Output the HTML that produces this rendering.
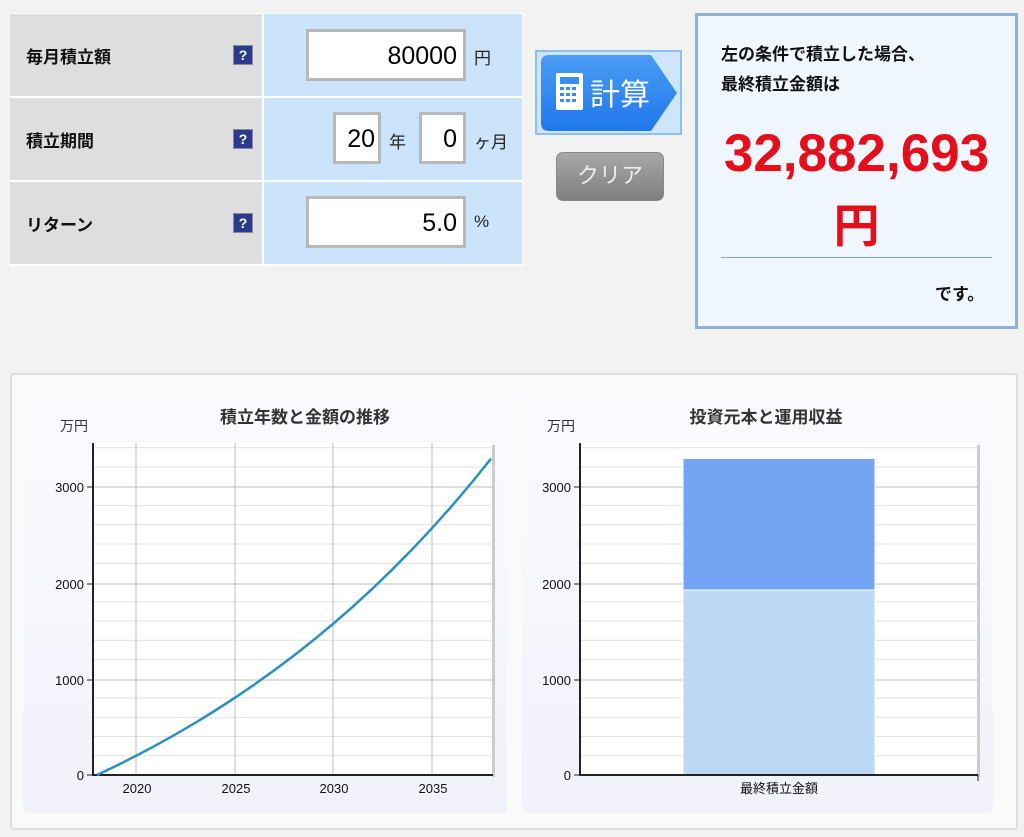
<!DOCTYPE html>
<html><head><meta charset="utf-8"><style>
body{margin:0;width:1024px;height:837px;background:#f2f2f2;font-family:"Liberation Sans","Noto Sans CJK JP",sans-serif;position:relative;overflow:hidden}
.a{position:absolute}
.lab{background:#dedede;font-weight:bold;font-size:17px;color:#111}
.val{background:#cce4fb}
.inp{background:#fff;border:3px solid #b8b8b8;box-sizing:border-box;font-size:25px;text-align:right;padding-right:6px;color:#000}
.q{width:18px;height:18px;background:#2a3b8f;color:#fff;font-size:14px;font-weight:bold;text-align:center;line-height:18px;border:1px solid #889}
.u{font-size:17px;color:#222}
</style></head><body>
<div class="a" style="left:10px;top:13px;width:513px;height:253px;background:#fff"></div>
<div class="a lab" style="left:10px;top:14px;width:252px;height:82px"><span class="a" style="left:16px;top:29px">毎月積立額</span><div class="a q" style="left:223px;top:31px">?</div></div>
<div class="a lab" style="left:10px;top:98px;width:252px;height:82px"><span class="a" style="left:16px;top:29px">積立期間</span><div class="a q" style="left:223px;top:31px">?</div></div>
<div class="a lab" style="left:10px;top:182px;width:252px;height:82px"><span class="a" style="left:16px;top:29px">リターン</span><div class="a q" style="left:223px;top:31px">?</div></div>
<div class="a val" style="left:264px;top:14px;width:258px;height:82px"></div>
<div class="a val" style="left:264px;top:98px;width:258px;height:82px"></div>
<div class="a val" style="left:264px;top:182px;width:258px;height:82px"></div>
<div class="a inp" style="left:306px;top:29px;width:160px;height:52px;line-height:48px">80000</div>
<span class="a u" style="left:474px;top:44px">円</span>
<div class="a inp" style="left:333px;top:112px;width:48px;height:52px;line-height:48px;padding-right:3px">20</div>
<span class="a u" style="left:389px;top:128px">年</span>
<div class="a inp" style="left:419px;top:112px;width:47px;height:52px;line-height:48px">0</div>
<span class="a u" style="left:474px;top:128px">ヶ月</span>
<div class="a inp" style="left:306px;top:196px;width:160px;height:52px;line-height:48px">5.0</div>
<span class="a u" style="left:474px;top:212px">%</span>

<div class="a" style="left:535px;top:50px;width:143px;height:81px;border:2px solid #8cc0f4;background:#cfe5fb"></div>
<svg class="a" style="left:541px;top:55px" width="137" height="76"><defs><linearGradient id="bg" x1="0" y1="0" x2="0" y2="1"><stop offset="0" stop-color="#4b9cf4"/><stop offset="1" stop-color="#1f78ec"/></linearGradient></defs>
<path d="M8 0 H110 L136 38 L110 76 H8 Q0 76 0 68 V8 Q0 0 8 0Z" fill="url(#bg)"/>
<rect x="15" y="18" width="27" height="37" rx="2" fill="#fff"/><rect x="19" y="22" width="19" height="7" fill="#3a8cf0"/>
<g fill="#3a8cf0"><rect x="19" y="32" width="4" height="3"/><rect x="25" y="32" width="4" height="3"/><rect x="31" y="32" width="4" height="3"/><rect x="19" y="38" width="4" height="3"/><rect x="25" y="38" width="4" height="3"/><rect x="31" y="38" width="4" height="3"/><rect x="19" y="44" width="4" height="3"/><rect x="25" y="44" width="4" height="3"/><rect x="31" y="44" width="4" height="3"/></g>
<text x="49" y="50" font-size="30" fill="#fff" font-family="Noto Sans CJK JP,sans-serif">計算</text></svg>
<div class="a" style="left:556px;top:152px;width:108px;height:49px;border-radius:7px;background:linear-gradient(#a8a8a8,#7e7e7e);border:1px solid #888;box-sizing:border-box;color:#eee;font-size:22px;text-align:center;line-height:46px">クリア</div>

<div class="a" style="left:695px;top:13px;width:323px;height:316px;box-sizing:border-box;border:3px solid #8eb1d8;background:#f0f6fd"></div>
<div class="a" style="left:721px;top:40px;font-size:17px;font-weight:bold;line-height:30px;color:#111">左の条件で積立した場合、<br>最終積立金額は</div>
<div class="a" style="left:695px;top:123px;width:323px;text-align:center;color:#e50f1b;font-size:53px;font-weight:bold">32,882,693</div>
<div class="a" style="left:695px;top:190px;width:323px;text-align:center;color:#e50f1b;font-size:46px;font-weight:bold;font-family:'Noto Sans CJK JP',sans-serif">円</div>
<div class="a" style="left:721px;top:257px;width:271px;height:1px;background:#7fa5d1"></div>
<div class="a" style="left:935px;top:280px;font-size:17px;font-weight:bold;color:#111">です。</div>

<div class="a" style="left:10px;top:373px;width:1008px;height:457px;box-sizing:border-box;border:2px solid #ddd;border-radius:4px;background:#fafafa"></div>
<div class="a" style="left:23px;top:386px;width:484px;height:427px;border-radius:5px;background:linear-gradient(#fbfbfe,#f1f1fb)"></div>
<div class="a" style="left:522px;top:386px;width:471px;height:427px;border-radius:5px;background:linear-gradient(#fbfbfe,#f1f1fb)"></div>

<svg class="a" style="left:0;top:0" width="1024" height="837" font-family="Liberation Sans,Noto Sans CJK JP,sans-serif">
<g>
<rect x="93" y="443" width="400" height="332" fill="#fff"/>
<rect x="492" y="445" width="3" height="332" fill="#ccc"/>
<g stroke="#e2e2e2" stroke-width="1">
<line x1="93" x2="493" y1="755.8" y2="755.8"/><line x1="93" x2="493" y1="736.5" y2="736.5"/><line x1="93" x2="493" y1="717.3" y2="717.3"/><line x1="93" x2="493" y1="698" y2="698"/><line x1="93" x2="493" y1="659.6" y2="659.6"/><line x1="93" x2="493" y1="640.3" y2="640.3"/><line x1="93" x2="493" y1="621" y2="621"/><line x1="93" x2="493" y1="601.8" y2="601.8"/><line x1="93" x2="493" y1="563.3" y2="563.3"/><line x1="93" x2="493" y1="544" y2="544"/><line x1="93" x2="493" y1="524.8" y2="524.8"/><line x1="93" x2="493" y1="505.6" y2="505.6"/><line x1="93" x2="493" y1="467" y2="467"/><line x1="93" x2="493" y1="447.8" y2="447.8"/>
</g>
<g stroke="#bdbdbd"><line x1="93" x2="493" y1="680" y2="680"/><line x1="93" x2="493" y1="584" y2="584"/><line x1="93" x2="493" y1="487" y2="487"/>
<line x1="136" x2="136" y1="443" y2="775"/><line x1="235" x2="235" y1="443" y2="775"/><line x1="333" x2="333" y1="443" y2="775"/><line x1="432" x2="432" y1="443" y2="775"/></g>
<path d="M93 443V775H493" fill="none" stroke="#222" stroke-width="2"/>
<g stroke="#222"><line x1="87" x2="93" y1="775" y2="775"/><line x1="87" x2="93" y1="680" y2="680"/><line x1="87" x2="93" y1="584" y2="584"/><line x1="87" x2="93" y1="487" y2="487"/></g>
<polyline fill="none" stroke="#2a90c0" stroke-width="2.5" points="97,775 116.7,765.6 136.4,755.6 156.1,745.2 175.8,734.2 195.5,722.7 215.2,710.5 234.9,697.8 254.6,684.4 274.3,670.3 294,655.5 313.7,639.9 333.4,623.6 353.1,606.4 372.8,588.3 392.5,569.3 412.2,549.3 431.9,528.3 451.6,506.3 471.3,483.1 491,458.7"/>
<g font-size="13" fill="#111" text-anchor="end"><text x="84" y="780">0</text><text x="84" y="685">1000</text><text x="84" y="589">2000</text><text x="84" y="492">3000</text></g>
<g font-size="13" fill="#111" text-anchor="middle"><text x="137" y="793">2020</text><text x="236" y="793">2025</text><text x="334" y="793">2030</text><text x="433" y="793">2035</text></g>
<text x="60" y="431" font-size="14" fill="#333">万円</text>
<text x="305" y="423" font-size="17" font-weight="bold" fill="#333" text-anchor="middle">積立年数と金額の推移</text>
</g>
<g>
<rect x="580" y="443" width="398" height="332" fill="#fff"/>
<rect x="977" y="445" width="3" height="332" fill="#ccc"/>
<g stroke="#e2e2e2">
<line x1="580" x2="978" y1="755.8" y2="755.8"/><line x1="580" x2="978" y1="736.5" y2="736.5"/><line x1="580" x2="978" y1="717.3" y2="717.3"/><line x1="580" x2="978" y1="698" y2="698"/><line x1="580" x2="978" y1="659.6" y2="659.6"/><line x1="580" x2="978" y1="640.3" y2="640.3"/><line x1="580" x2="978" y1="621" y2="621"/><line x1="580" x2="978" y1="601.8" y2="601.8"/><line x1="580" x2="978" y1="563.3" y2="563.3"/><line x1="580" x2="978" y1="544" y2="544"/><line x1="580" x2="978" y1="524.8" y2="524.8"/><line x1="580" x2="978" y1="505.6" y2="505.6"/><line x1="580" x2="978" y1="467" y2="467"/><line x1="580" x2="978" y1="447.8" y2="447.8"/>
</g>
<g stroke="#bdbdbd"><line x1="580" x2="978" y1="680" y2="680"/><line x1="580" x2="978" y1="584" y2="584"/><line x1="580" x2="978" y1="487" y2="487"/></g>
<rect x="683" y="590" width="192" height="185" fill="#bdd8f5" stroke="#fff"/>
<rect x="683" y="458.5" width="192" height="131.5" fill="#74a5f5" stroke="#fff"/>
<path d="M580 443V775H978" fill="none" stroke="#222" stroke-width="2"/>
<g stroke="#222"><line x1="574" x2="580" y1="775" y2="775"/><line x1="574" x2="580" y1="680" y2="680"/><line x1="574" x2="580" y1="584" y2="584"/><line x1="574" x2="580" y1="487" y2="487"/><line x1="978" x2="978" y1="775" y2="781"/></g>
<g font-size="13" fill="#111" text-anchor="end"><text x="571" y="780">0</text><text x="571" y="685">1000</text><text x="571" y="589">2000</text><text x="571" y="492">3000</text></g>
<text x="779" y="793" font-size="13" fill="#111" text-anchor="middle">最終積立金額</text>
<text x="547" y="431" font-size="14" fill="#333">万円</text>
<text x="766" y="423" font-size="17" font-weight="bold" fill="#333" text-anchor="middle">投資元本と運用収益</text>
</g>
</svg>
</body></html>
